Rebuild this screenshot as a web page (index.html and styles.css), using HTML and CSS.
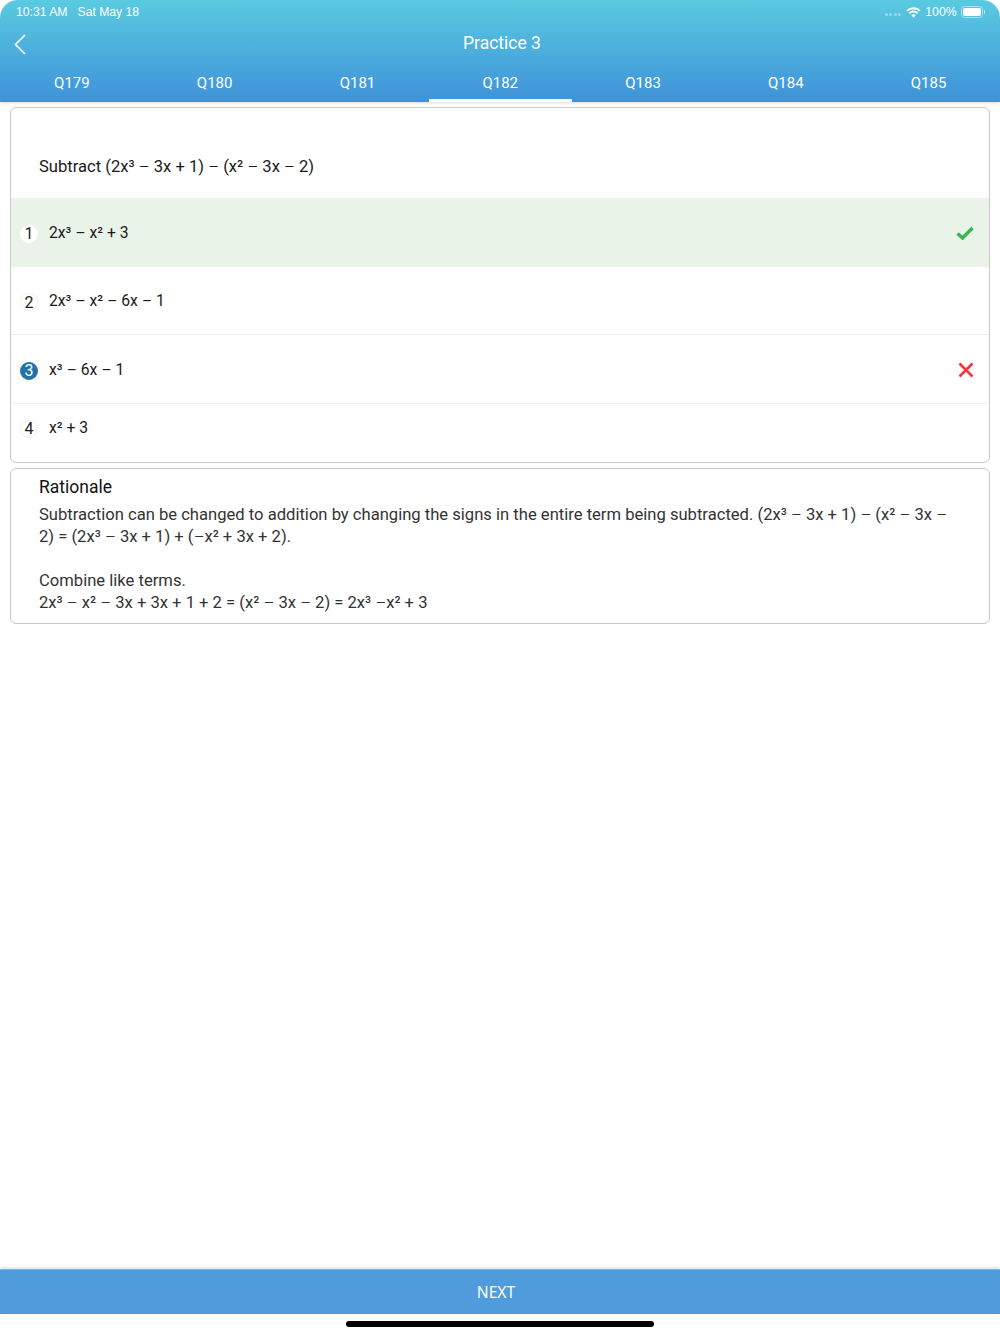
FILE: index.html
```
<!DOCTYPE html>
<html lang="en">
<head>
<meta charset="utf-8">
<title>Practice 3</title>
<link rel="stylesheet" href="styles.css">
</head>
<body>
<div class="app">
  <header class="header">
    <div class="status">
      <div class="status-left"><span>10:31 AM</span><span>Sat May 18</span></div>
      <div class="status-right">
        <span class="dots"><i></i><i></i><i></i><i></i></span>
        <svg class="wifi" width="15" height="11" viewBox="0 0 16 12"><path d="M1 4.2a10 10 0 0 1 14 0" fill="none" stroke="#fff" stroke-width="2"/><path d="M3.5 6.8a6.4 6.4 0 0 1 9 0" fill="none" stroke="#fff" stroke-width="2"/><path d="M8 11.6 5.6 9a3.4 3.4 0 0 1 4.8 0z" fill="#fff"/></svg>
        <span>100%</span>
        <span class="battery"><span class="battery-fill"></span></span><span class="battery-tip"></span>
      </div>
    </div>
    <div class="title-bar">
      <svg class="back" width="14" height="22" viewBox="0 0 14 22"><path d="M12 2 2.5 11.5 12 21" fill="none" stroke="#fff" stroke-width="1.7"/></svg>
      <h1 class="title">Practice 3</h1>
    </div>
    <nav class="tabs">
      <a class="tab">Q179</a>
      <a class="tab">Q180</a>
      <a class="tab">Q181</a>
      <a class="tab active">Q182</a>
      <a class="tab">Q183</a>
      <a class="tab">Q184</a>
      <a class="tab">Q185</a>
    </nav>
  </header>
  <main class="content">
    <section class="card question-card">
      <div class="question">Subtract (2x³ <span class="m">−</span> 3x + 1) <span class="m">−</span> (x² <span class="m">−</span> 3x <span class="m">−</span> 2)</div>
      <div class="option correct">
        <span class="num num-white">1</span><span class="opt-text">2x³ <span class="m">−</span> x² + 3</span>
        <svg class="mark" width="18" height="14" viewBox="0 0 18 14"><path d="M1.5 7.5 6.5 12 16.5 2" fill="none" stroke="#35b558" stroke-width="3.4"/></svg>
      </div>
      <div class="option divided">
        <span class="num">2</span><span class="opt-text">2x³ <span class="m">−</span> x² <span class="m">−</span> 6x <span class="m">−</span> 1</span>
      </div>
      <div class="option divided">
        <span class="num num-selected">3</span><span class="opt-text">x³ <span class="m">−</span> 6x <span class="m">−</span> 1</span>
        <svg class="mark" width="16" height="16" viewBox="0 0 16 16"><path d="M1.5 1.5 14.5 14.5M14.5 1.5 1.5 14.5" fill="none" stroke="#fb3340" stroke-width="2.6"/></svg>
      </div>
      <div class="option last">
        <span class="num">4</span><span class="opt-text">x² + 3</span>
      </div>
    </section>
    <section class="card rationale">
      <h2 class="rationale-title">Rationale</h2>
      <p class="rationale-text">Subtraction can be changed to addition by changing the signs in the entire term being subtracted. (2x³ <span class="m">−</span> 3x + 1) <span class="m">−</span> (x² <span class="m">−</span> 3x <span class="m">−</span> 2) = (2x³ <span class="m">−</span> 3x + 1) + (<span class="m">−</span>x² + 3x + 2).<br><br>Combine like terms.<br>2x³ <span class="m">−</span> x² <span class="m">−</span> 3x + 3x + 1 + 2 = (x² <span class="m">−</span> 3x <span class="m">−</span> 2) = 2x³ <span class="m">−</span>x² + 3</p>
    </section>
  </main>
  <footer class="footer">
    <button class="next">NEXT</button>
    <div class="home-zone"><span class="home"></span></div>
  </footer>
</div>
</body>
</html>
```
FILE: styles.css
```
* { box-sizing: border-box; }
html, body { margin: 0; padding: 0; background: #fff; }
body { font-family: Roboto, "Liberation Sans", sans-serif; color: #222; }
.app { width: 1000px; height: 1334px; display: flex; flex-direction: column; background: #fff; overflow: hidden; }
.m { font-family: "Liberation Sans", sans-serif; margin: 0 .6px; }
.header { height: 102px; flex: none; border-radius: 18px 18px 0 0; background: linear-gradient(#59cae0, #3f92d9); color: #fff; box-shadow: 0 1px 3px rgba(0,0,0,.15); display: flex; flex-direction: column; position: relative; }
.status { height: 24px; flex: none; display: flex; justify-content: space-between; align-items: center; padding: 0 15px 0 16px; font-family: "Liberation Sans", sans-serif; font-size: 12.2px; }
.status-left { display: flex; gap: 10px; }
.status-right { display: flex; align-items: center; gap: 4px; }
.dots { display: flex; gap: 1.5px; margin-right: 1px; margin-top: 5px; }
.dots i { width: 3px; height: 3px; border-radius: 50%; background: rgba(255,255,255,.4); }
.battery { width: 22px; height: 12px; border: 1px solid rgba(255,255,255,.5); border-radius: 3.5px; padding: 1px; display: flex; }
.battery-fill { flex: 1; background: #fff; border-radius: 2px; }
.battery-tip { width: 1.5px; height: 4px; margin-left: -3px; background: rgba(255,255,255,.6); border-radius: 0 1px 1px 0; }
.title-bar { height: 38px; flex: none; display: flex; align-items: center; justify-content: center; position: relative; }
.back { position: absolute; left: 13px; top: 9px; }
.title { margin: 0 0 0 4px; font-size: 17.5px; font-weight: 400; }
.tabs { flex: 1; display: grid; grid-template-columns: repeat(7, 1fr); padding-left: .5px; }
.tab { display: flex; align-items: center; justify-content: center; font-size: 15px; padding-top: 4px; border-bottom: 3px solid transparent; }
.tab.active { border-bottom-color: #fff; }
.content { flex: 1; display: flex; flex-direction: column; gap: 5px; padding: 5px 10px 0; }
.card { border: 1px solid #c9c9c9; border-radius: 6px; background: #fff; overflow: hidden; }
.question { height: 90px; padding: 49px 28px 0; font-size: 16.6px; line-height: 20px; color: #1a1a1a; }
.option { display: flex; align-items: center; height: 68.7px; padding: 0 15px 0 9px; font-size: 15.7px; color: #1a1a1a; }
.option.divided { border-bottom: 1px solid #eee; }
.option.correct { background: #e9f3e8; }
.option.last { height: 58px; padding-bottom: 12px; }
.num { width: 18px; height: 18px; flex: none; display: flex; align-items: center; justify-content: center; border: 1px solid #f0f0f0; border-radius: 50%; font-size: 16px; margin-top: 3px; color: #222; }
.num-white { background: #fff; border-color: #fff; }
.num-selected { background: #2272a8; border-color: #2272a8; color: #fff; }
.opt-text { margin-left: 11px; flex: 1; }
.mark { flex: none; margin-top: 2px; }
.rationale { height: 156px; padding: 7px 28px 0; }
.rationale-title { margin: 0; font-size: 17.5px; font-weight: 400; line-height: 22px; color: #111; }
.rationale-text { margin: 6px 0 0; font-size: 16.6px; line-height: 22px; color: #333; }
.footer { flex: none; }
.next { display: block; width: 100%; height: 45px; border: 0; border-top: 1px solid #7db4e4; padding: 0 8px 0 0; background: #4f9bdc; color: #fff; font-family: "Noto Sans", sans-serif; font-size: 15.6px; box-shadow: 0 -1px 3px rgba(0,0,0,.15); }
.home-zone { height: 20px; display: flex; justify-content: center; padding-top: 7px; }
.home { width: 308px; height: 6px; background: #000; border-radius: 3px; }
```
